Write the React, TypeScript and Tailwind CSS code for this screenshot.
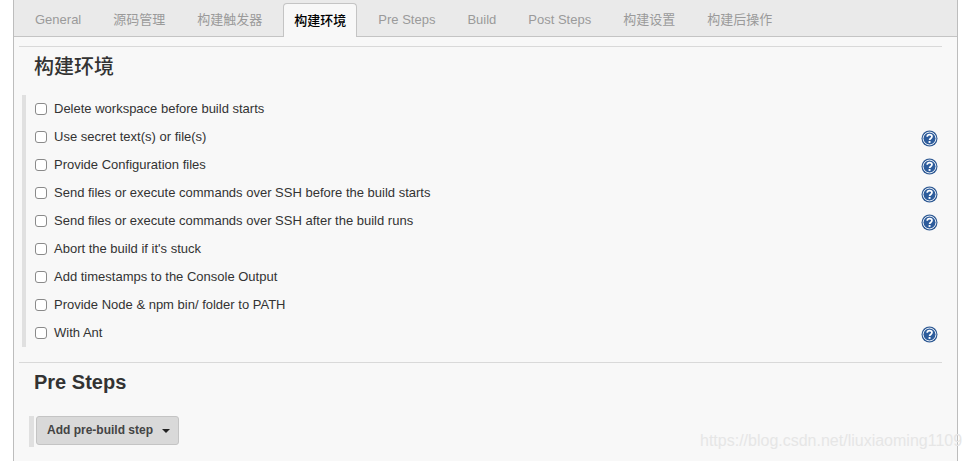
import React from 'react';

const tabs = ['General', '源码管理', '构建触发器', '构建环境', 'Pre Steps', 'Build', 'Post Steps', '构建设置', '构建后操作'];

const options = [
  { label: 'Delete workspace before build starts', help: false },
  { label: 'Use secret text(s) or file(s)', help: true },
  { label: 'Provide Configuration files', help: true },
  { label: 'Send files or execute commands over SSH before the build starts', help: true },
  { label: 'Send files or execute commands over SSH after the build runs', help: true },
  { label: "Abort the build if it's stuck", help: false },
  { label: 'Add timestamps to the Console Output', help: false },
  { label: 'Provide Node & npm bin/ folder to PATH', help: false },
  { label: 'With Ant', help: true },
];

const HelpIcon: React.FC = () => (
  <svg width="17" height="17" viewBox="0 0 17 17" className="mt-[2px] block">
    <circle cx="8.5" cy="8.5" r="8" fill="#2f5a94" />
    <circle cx="8.5" cy="8.5" r="6.4" fill="#2d5c9c" stroke="#e8eef6" strokeWidth="1" />
    <path d="M6.2 6.8c0-1.4 1-2.2 2.4-2.2s2.4.8 2.4 2c0 1.9-2.4 1.8-2.4 3.5" fill="none" stroke="#fff" strokeWidth="1.7" />
    <rect x="7.6" y="11" width="1.9" height="1.9" fill="#fff" />
  </svg>
);

const App: React.FC = () => {
  return (
    <div className="relative h-[461px] w-[972px] overflow-hidden bg-white font-['Liberation_Sans','Noto_Sans_CJK_SC',sans-serif] text-[13px] text-[#333]">
      <div className="ml-[13px] h-full w-[945px] border-x border-[#bdbdbd] bg-[#f8f8f8]">
        {/* tab strip */}
        <div className="flex h-[37px] items-end gap-2 border-b border-[#c4c4c4] bg-[#eaeaea] pl-[9px]">
          {tabs.map((tab) => {
            const active = tab === '构建环境';
            return (
              <div
                key={tab}
                className={
                  active
                    ? '-mb-px mx-px flex h-[34px] items-center rounded-t border border-b-0 border-[#c4c4c4] bg-[#f8f8f8] px-[10px] font-medium text-black'
                    : 'flex h-[33px] items-center border border-transparent px-[11px] text-[#9a9a9a]'
                }
              >
                {tab}
              </div>
            );
          })}
        </div>

        <div className="pl-[5px] pr-[15px] pt-[9px]">
          <section className="border-t border-[#d9d9d9]">
            <h2 className="pl-[15px] pt-[7px] text-[20px] leading-[26px] font-medium text-[#333]">构建环境</h2>
            <div className="mt-[15px] ml-[3px] border-l-4 border-[#e0e0e0]">
              {options.map((opt) => (
                <div key={opt.label} className="flex h-[28px] items-center pl-[9px] pr-[4px]">
                  <span className="h-[12px] w-[12px] rounded-[3px] border border-[#8a8a8a] bg-white" />
                  <span className="ml-[7px] flex-1">{opt.label}</span>
                  {opt.help && <HelpIcon />}
                </div>
              ))}
            </div>
          </section>

          <section className="mt-[15px] border-t border-[#d9d9d9]">
            <h2 className="pl-[15px] pt-[6px] text-[20px] leading-[26px] font-bold text-[#333]">Pre Steps</h2>
            <div className="mt-[21px] ml-[10px] flex h-[31px] items-start border-l-[5px] border-[#e0e0e0] pl-[2px]">
              <button className="flex h-[29px] w-[143px] items-center rounded-[3px] border border-[#c4c4c4] bg-[#d9d9d9] pb-[2px] pl-[10px] text-[12px] font-bold text-[#444]">
                Add pre-build step
                <span className="ml-[9px] mt-[2px] h-0 w-0 border-x-[4px] border-t-[4px] border-x-transparent border-t-[#222]" />
              </button>
            </div>
          </section>
        </div>
      </div>

      {/* watermark */}
      <div className="absolute left-[700px] top-[430px] text-[16px] leading-[22px] whitespace-nowrap text-[#e6e6e6]">
        https://blog.csdn.net/liuxiaoming1109
      </div>
    </div>
  );
};

export default App;
